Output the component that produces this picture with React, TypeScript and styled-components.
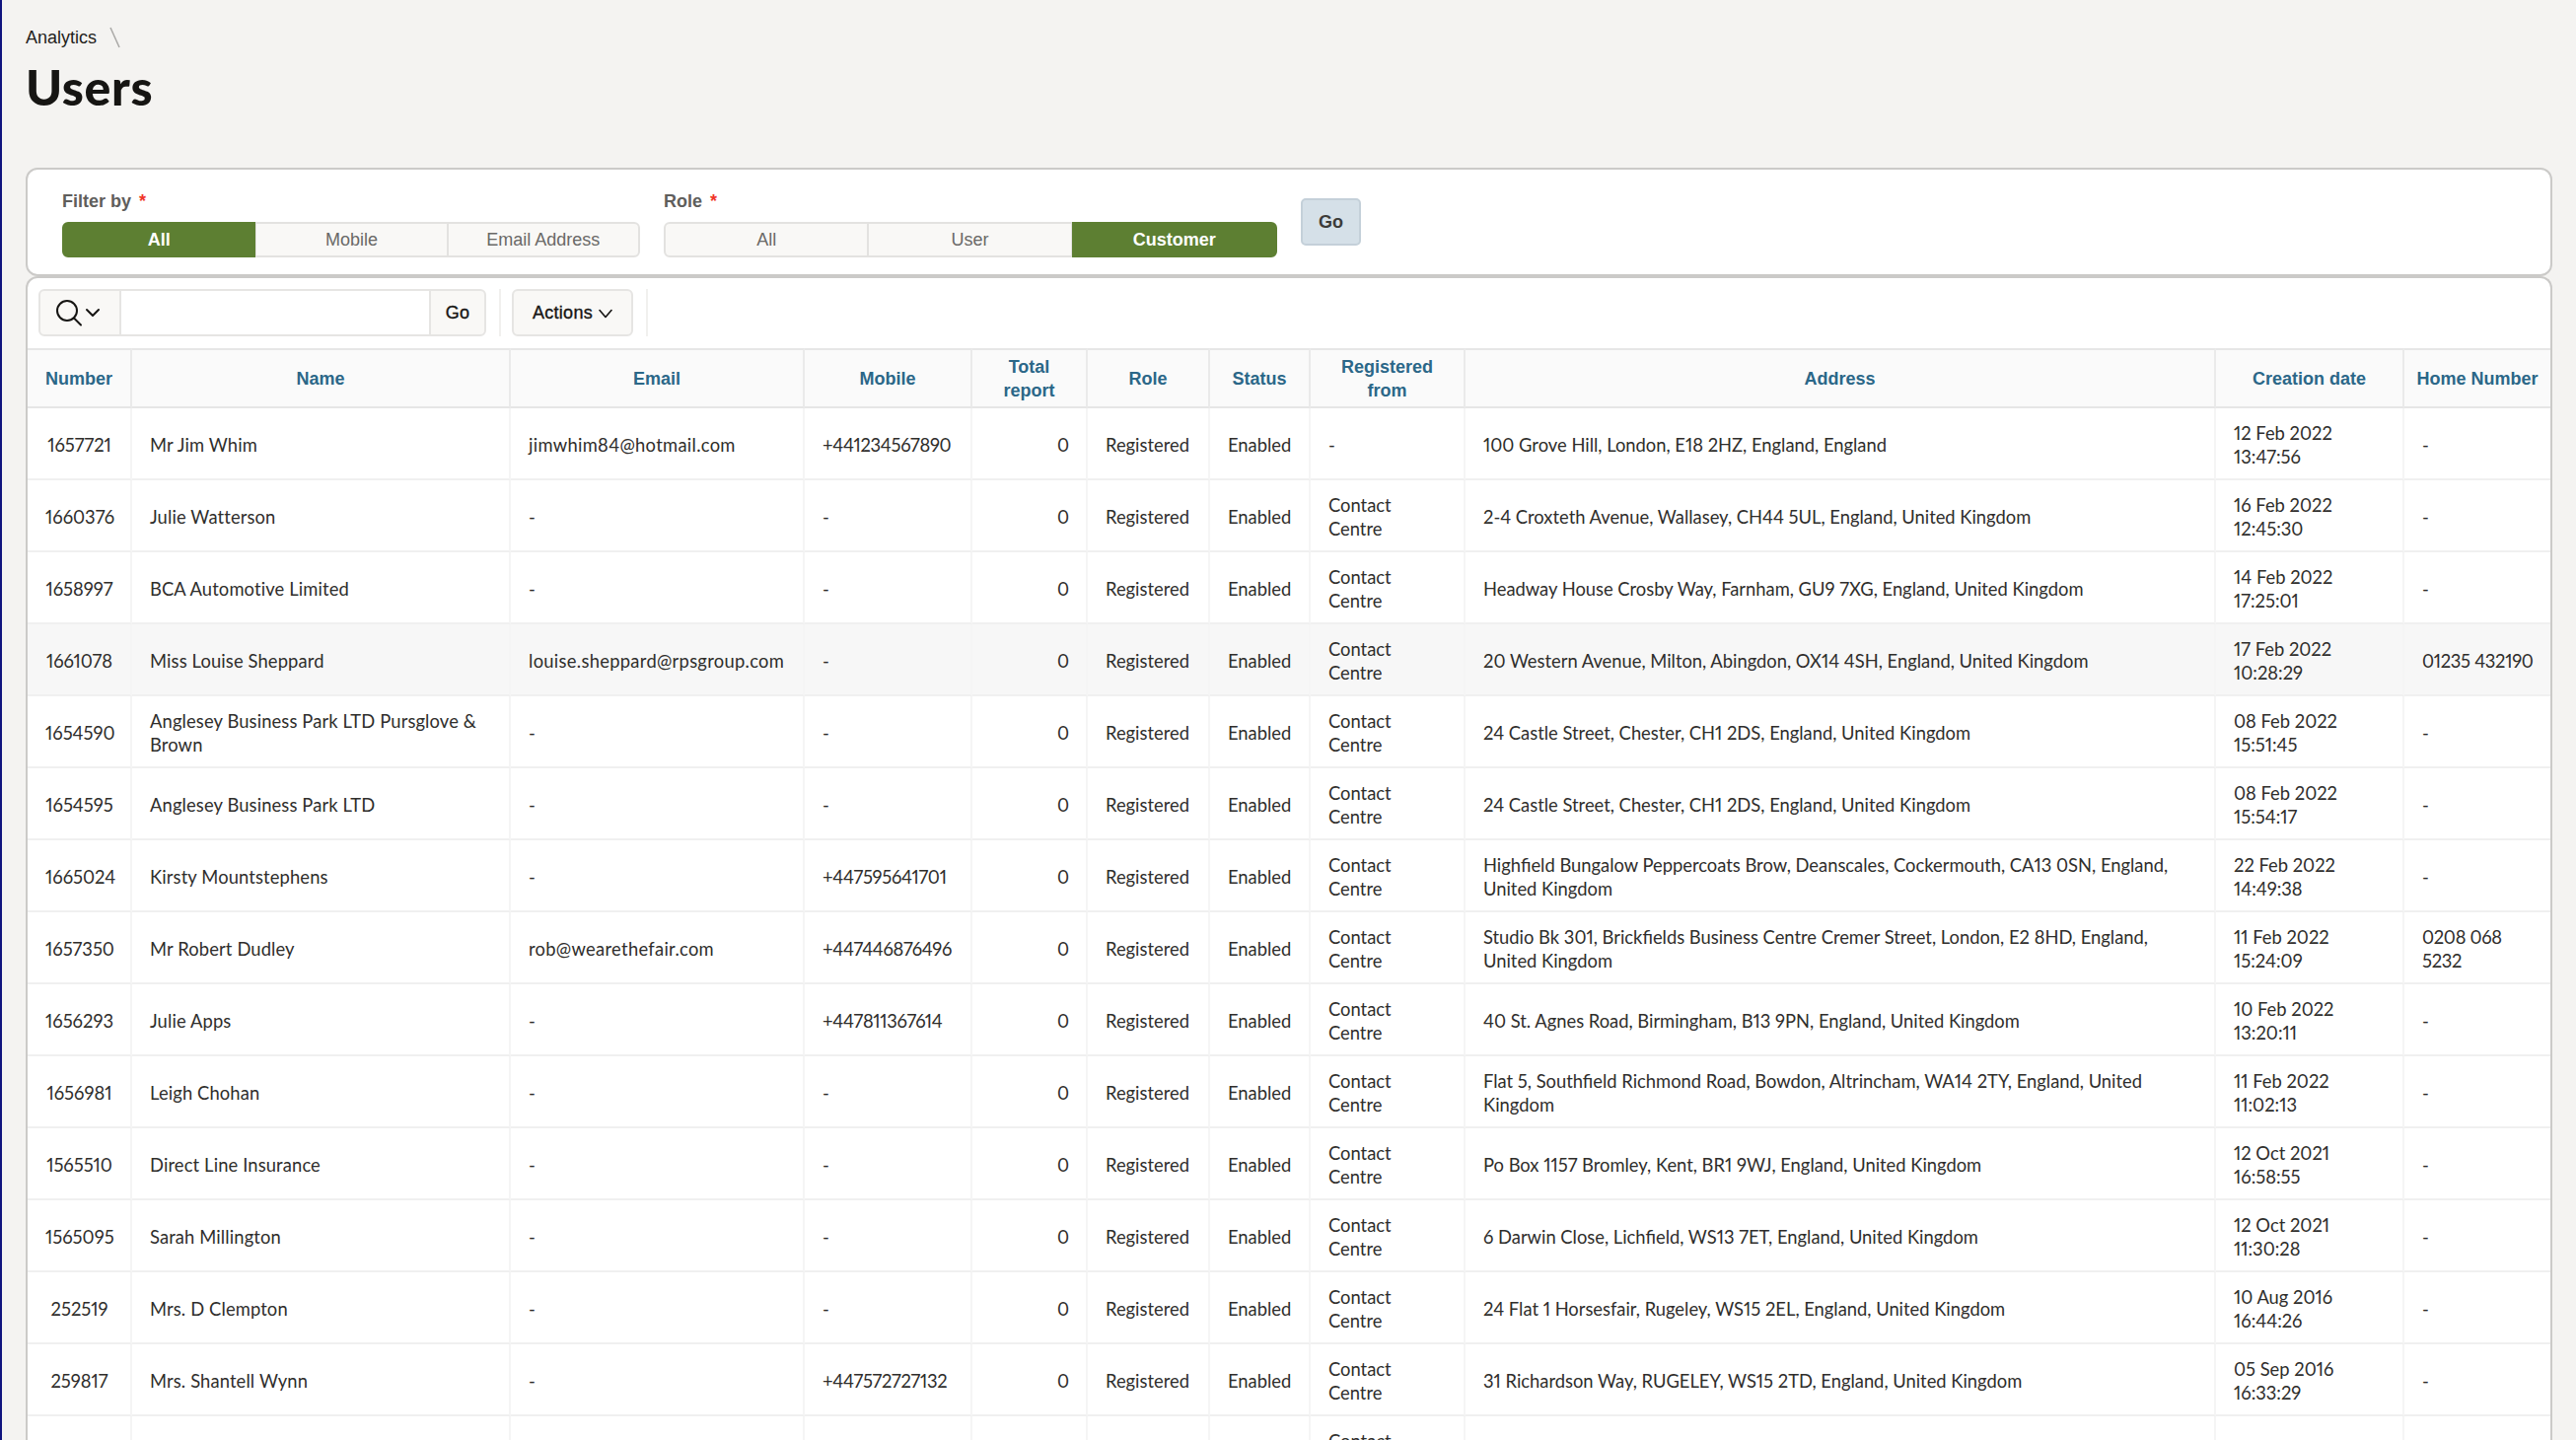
import React from "react";
import styled, { createGlobalStyle } from "styled-components";

const Global = createGlobalStyle`
  html, body { margin: 0; padding: 0; height: 1460px; overflow: hidden; background: #f4f3f1; }
  #root { height: 1460px; overflow: hidden; }
  * { box-sizing: border-box; }
`;
const Page = styled.div`
  position: relative;
  height: 1460px;
  overflow: hidden;
  border-left: 2px solid #10147e;
  padding: 26px 24px 0 24px;
  font-family: "Liberation Sans", Arial, sans-serif;
  color: #161513;
`;
const Accent = styled.div`
  position: absolute;
  left: -2px;
  top: 60px;
  width: 1px;
  height: 60px;
  background: #5fe0d8;
`;
const Breadcrumb = styled.div`
  display: flex;
  align-items: center;
  height: 24px;
  font-size: 18px;
  line-height: 24px;
  color: #1f1e1c;
`;
const Crumb = styled.span`
  margin-right: 13px;
`;
const Title = styled.h1`
  margin: 10px 0 54px 0;
  height: 56px;
  font: 900 50px/56px Lato, "Noto Sans", sans-serif;
  letter-spacing: 0.6px;
  color: #161513;
`;
const FilterCard = styled.section`
  display: flex;
  align-items: flex-start;
  height: 110px;
  background: #fff;
  border: 2px solid #cbcac8;
  border-radius: 12px;
  padding: 19px 0 0 35px;
`;
const Field = styled.div<{ $w: number }>`
  width: ${(p) => p.$w}px;
  margin-right: 24px;
`;
const FieldLabel = styled.div`
  height: 24px;
  margin-bottom: 10px;
  padding-top: 1px;
  font-size: 18px;
  line-height: 24px;
  font-weight: 700;
  color: #5f5e5c;
`;
const Star = styled.span`
  color: #f0352a;
  margin-left: 8px;
  font-weight: 700;
`;
const Segments = styled.div`
  display: flex;
  height: 36px;
`;
const Segment = styled.div<{ $on?: boolean }>`
  flex: 1;
  display: flex;
  align-items: center;
  justify-content: center;
  padding-top: 1px;
  font-size: 18px;
  font-weight: ${(p) => (p.$on ? 700 : 400)};
  color: ${(p) => (p.$on ? "#fff" : "#6a6967")};
  background: ${(p) => (p.$on ? "#5d7f32" : "#f9f8f6")};
  border: 2px solid ${(p) => (p.$on ? "#5d7f32" : "#e3e2e0")};
  border-left-width: ${(p) => (p.$on ? 2 : 1)}px;
  border-right-width: ${(p) => (p.$on ? 2 : 1)}px;
  &:first-child { border-radius: 6px 0 0 6px; border-left-width: 2px; }
  &:last-child { border-radius: 0 6px 6px 0; border-right-width: 2px; }
`;
const ApplyButton = styled.div`
  width: 61px;
  height: 48px;
  margin-top: 10px;
  display: flex;
  align-items: center;
  justify-content: center;
  background: #d5e0e8;
  border: 2px solid #c4d0d9;
  border-radius: 5px;
  font-size: 18px;
  font-weight: 700;
  color: #3c3b39;
`;
const ReportCard = styled.section`
  background: #fff;
  border: 2px solid #cbcac8;
  border-bottom: none;
  border-radius: 12px 12px 0 0;
  height: 1300px;
`;
const Toolbar = styled.div`
  display: flex;
  align-items: stretch;
  height: 71px;
  padding: 11px 0 12px 11px;
`;
const SearchToggle = styled.div`
  width: 84px;
  display: flex;
  align-items: center;
  padding-left: 15px;
  background: #f9f8f6;
  border: 2px solid #e6e5e3;
  border-radius: 6px 0 0 6px;
`;
const SearchInput = styled.div`
  width: 312px;
  background: #fff;
  border-top: 2px solid #e6e5e3;
  border-bottom: 2px solid #e6e5e3;
`;
const ToolbarButton = styled.div<{ $join?: boolean; $w: number }>`
  width: ${(p) => p.$w}px;
  display: flex;
  align-items: center;
  justify-content: center;
  gap: 6px;
  padding-top: 1px;
  background: #f9f8f6;
  border: 2px solid #e6e5e3;
  border-radius: ${(p) => (p.$join ? "0 6px 6px 0" : "6px")};
  font-size: 18px;
  color: #161513;
  -webkit-text-stroke: 0.35px #161513;
  letter-spacing: 0.25px;
`;
const Separator = styled.div`
  width: 2px;
  margin: 0 11px 0 13px;
  background: #f1f0ee;
`;
const Table = styled.table`
  width: 2558px;
  table-layout: fixed;
  border-collapse: separate;
  border-spacing: 0;
  font-family: Lato, "Noto Sans", sans-serif;
  font-variant-numeric: proportional-nums;
`;
const HeadCell = styled.th<{ $last?: boolean }>`
  height: 61px;
  padding: 0 ${(p) => (p.$last ? 8 : 12)}px;
  background: #fafafa;
  border-top: 2px solid #e6e6e6;
  border-bottom: 2px solid #e6e6e6;
  border-right: ${(p) => (p.$last ? "none" : "2px solid #eaeaea")};
  font: 700 18px/24px "Liberation Sans", Arial, sans-serif;
  color: #2b6788;
  text-align: center;
  vertical-align: middle;
`;
const Row = styled.tr<{ $hover?: boolean }>`
  background: ${(p) => (p.$hover ? "#f7f7f7" : "#fff")};
`;
const Cell = styled.td<{ $align?: string; $last?: boolean; $track?: number }>`
  height: 73px;
  padding: 2px ${(p) => (p.$last ? 6 : 17)}px 0 18px;
  border-bottom: 2px solid #f0f0f0;
  border-right: ${(p) => (p.$last ? "none" : "2px solid #f5f5f5")};
  font-size: 18.35px;
  line-height: 24px;
  letter-spacing: ${(p) => p.$track ?? 0}px;
  color: #2f2e2c;
  text-align: ${(p) => p.$align || "left"};
  vertical-align: middle;
`;

const widths = [106, 384, 298, 170, 117, 124, 102, 157, 761, 191, 148];
const heads = ["Number", "Name", "Email", "Mobile", "Total report", "Role", "Status", "Registered from", "Address", "Creation date", "Home Number"];
type R = [string, string, string, string, string, string, string, string];
const CC = "Contact Centre";
const rows: R[] = [
  ["1657721", "Mr Jim Whim", "jimwhim84@hotmail.com", "+441234567890", "-", "100 Grove Hill, London, E18 2HZ, England, England", "12 Feb 2022 13:47:56", "-"],
  ["1660376", "Julie Watterson", "-", "-", CC, "2-4 Croxteth Avenue, Wallasey, CH44 5UL, England, United Kingdom", "16 Feb 2022 12:45:30", "-"],
  ["1658997", "BCA Automotive Limited", "-", "-", CC, "Headway House Crosby Way, Farnham, GU9 7XG, England, United Kingdom", "14 Feb 2022 17:25:01", "-"],
  ["1661078", "Miss Louise Sheppard", "louise.sheppard@rpsgroup.com", "-", CC, "20 Western Avenue, Milton, Abingdon, OX14 4SH, England, United Kingdom", "17 Feb 2022 10:28:29", "01235 432190"],
  ["1654590", "Anglesey Business Park LTD Pursglove & Brown", "-", "-", CC, "24 Castle Street, Chester, CH1 2DS, England, United Kingdom", "08 Feb 2022 15:51:45", "-"],
  ["1654595", "Anglesey Business Park LTD", "-", "-", CC, "24 Castle Street, Chester, CH1 2DS, England, United Kingdom", "08 Feb 2022 15:54:17", "-"],
  ["1665024", "Kirsty Mountstephens", "-", "+447595641701", CC, "Highfield Bungalow Peppercoats Brow, Deanscales, Cockermouth, CA13 0SN, England, United Kingdom", "22 Feb 2022 14:49:38", "-"],
  ["1657350", "Mr Robert Dudley", "rob@wearethefair.com", "+447446876496", CC, "Studio Bk 301, Brickfields Business Centre Cremer Street, London, E2 8HD, England, United Kingdom", "11 Feb 2022 15:24:09", "0208 068 5232"],
  ["1656293", "Julie Apps", "-", "+447811367614", CC, "40 St. Agnes Road, Birmingham, B13 9PN, England, United Kingdom", "10 Feb 2022 13:20:11", "-"],
  ["1656981", "Leigh Chohan", "-", "-", CC, "Flat 5, Southfield Richmond Road, Bowdon, Altrincham, WA14 2TY, England, United Kingdom", "11 Feb 2022 11:02:13", "-"],
  ["1565510", "Direct Line Insurance", "-", "-", CC, "Po Box 1157 Bromley, Kent, BR1 9WJ, England, United Kingdom", "12 Oct 2021 16:58:55", "-"],
  ["1565095", "Sarah Millington", "-", "-", CC, "6 Darwin Close, Lichfield, WS13 7ET, England, United Kingdom", "12 Oct 2021 11:30:28", "-"],
  ["252519", "Mrs. D Clempton", "-", "-", CC, "24 Flat 1 Horsesfair, Rugeley, WS15 2EL, England, United Kingdom", "10 Aug 2016 16:44:26", "-"],
  ["259817", "Mrs. Shantell Wynn", "-", "+447572727132", CC, "31 Richardson Way, RUGELEY, WS15 2TD, England, United Kingdom", "05 Sep 2016 16:33:29", "-"],
  ["", "", "", "", CC, "", "12 Jan 2017", ""],
];

const SearchIcon = () => (
  <svg width="48" height="30" viewBox="0 0 48 30" fill="none" stroke="#161513" strokeWidth="2" strokeLinecap="round" strokeLinejoin="round">
    <circle cx="12" cy="13" r="10" />
    <path d="M19 20.5 26 27.5" />
    <path d="M32 12l6 6 6-6" />
  </svg>
);
const Chevron = () => (
  <svg width="14" height="10" viewBox="0 0 14 10" fill="none" stroke="#161513" strokeWidth="1.6" strokeLinecap="round" strokeLinejoin="round">
    <path d="M1 1.5l6 7 6-7" />
  </svg>
);

export default function App() {
  return (
    <Page>
      <Global />
      <Accent />
      <Breadcrumb>
        <Crumb>Analytics</Crumb>
        <svg width="12" height="24" viewBox="0 0 12 24" fill="none" stroke="#a9a8a6" strokeWidth="1.5">
          <path d="M1 2l9 20" />
        </svg>
      </Breadcrumb>
      <Title>Users</Title>
      <FilterCard>
        <Field $w={586}>
          <FieldLabel>Filter by<Star>*</Star></FieldLabel>
          <Segments>
            <Segment $on>All</Segment>
            <Segment>Mobile</Segment>
            <Segment>Email Address</Segment>
          </Segments>
        </Field>
        <Field $w={622}>
          <FieldLabel>Role<Star>*</Star></FieldLabel>
          <Segments>
            <Segment>All</Segment>
            <Segment>User</Segment>
            <Segment $on>Customer</Segment>
          </Segments>
        </Field>
        <ApplyButton>Go</ApplyButton>
      </FilterCard>
      <ReportCard>
        <Toolbar>
          <SearchToggle><SearchIcon /></SearchToggle>
          <SearchInput />
          <ToolbarButton $join $w={58}>Go</ToolbarButton>
          <Separator />
          <ToolbarButton $w={123}>Actions<Chevron /></ToolbarButton>
          <Separator />
        </Toolbar>
        <Table>
          <colgroup>
            {widths.map((w, i) => <col key={i} style={{ width: w }} />)}
          </colgroup>
          <thead>
            <tr>
              {heads.map((h, i) => (
                <HeadCell key={h} $last={i === heads.length - 1}>{h}</HeadCell>
              ))}
            </tr>
          </thead>
          <tbody>
            {rows.map((r, i) => (
              <Row key={i} $hover={i === 3}>
                <Cell $align="center">{r[0]}</Cell>
                <Cell $track={0.13}>{r[1]}</Cell>
                <Cell $track={0.3}>{r[2]}</Cell>
                <Cell $track={-0.3}>{r[3]}</Cell>
                <Cell $align="right">{i < 14 ? "0" : ""}</Cell>
                <Cell>{i < 14 ? "Registered" : ""}</Cell>
                <Cell>{i < 14 ? "Enabled" : ""}</Cell>
                <Cell>{r[4]}</Cell>
                <Cell>{r[5]}</Cell>
                <Cell>{r[6]}</Cell>
                <Cell $last $track={-0.3}>{r[7]}</Cell>
              </Row>
            ))}
          </tbody>
        </Table>
      </ReportCard>
    </Page>
  );
}
